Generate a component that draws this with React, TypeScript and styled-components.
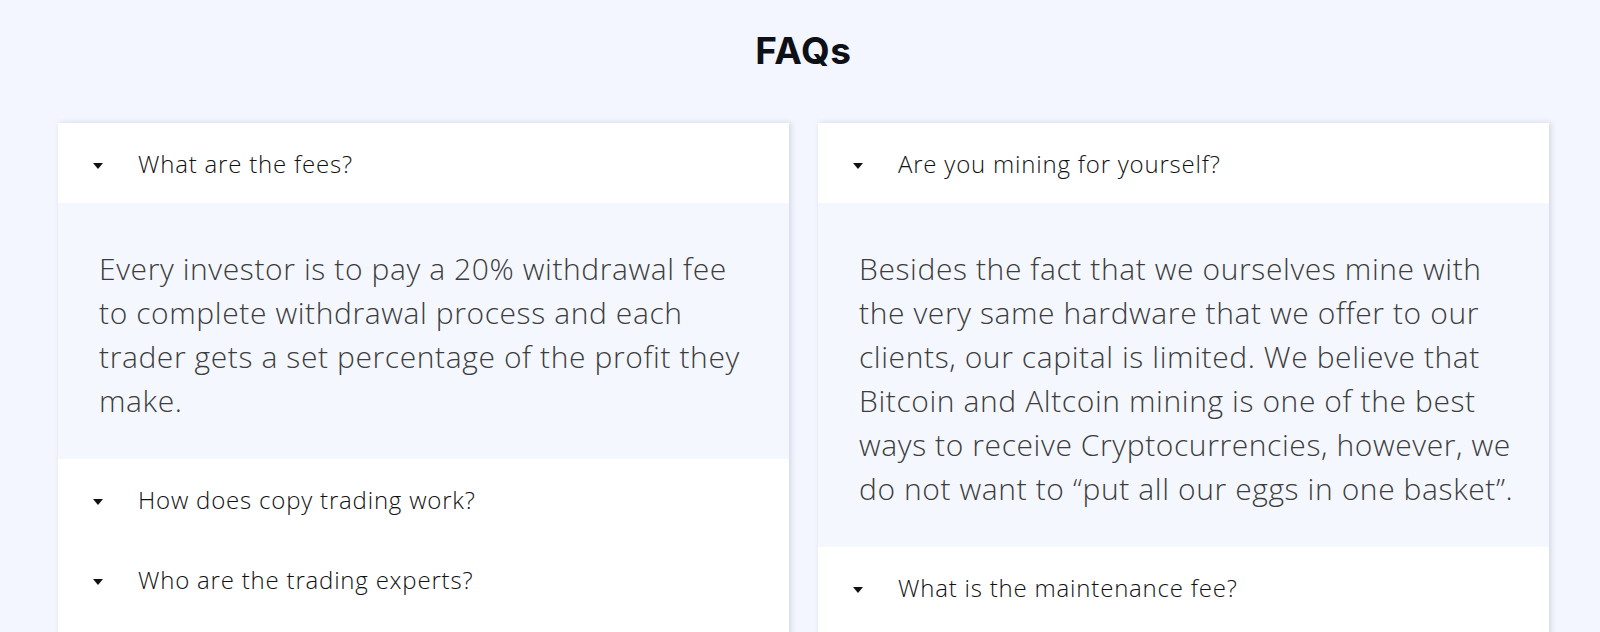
import React from "react";
import styled, { createGlobalStyle } from "styled-components";

const GlobalStyle = createGlobalStyle`
  html, body {
    margin: 0;
    padding: 0;
    background: #f3f6fe;
  }
  body {
    font-family: "Open Sans", "Lato", sans-serif;
  }
`;

const Page = styled.div`
  min-height: 700px;
  padding: 26px 51px 0 58px;
  box-sizing: border-box;
`;

const Title = styled.h1`
  margin: 0 0 47px;
  text-align: center;
  font-family: "Inter", "Lato", sans-serif;
  font-weight: 700;
  font-size: 37px;
  line-height: 50px;
  color: #0d1117;
  letter-spacing: 0.6px;
`;

const Columns = styled.div`
  display: grid;
  grid-template-columns: 1fr 1fr;
  gap: 29px;
  align-items: start;
`;

const Card = styled.div`
  background: #ffffff;
  box-shadow: 2px 0 6px rgba(20, 30, 60, 0.14);
  padding-bottom: 60px;
`;

const Item = styled.div``;

const Question = styled.button`
  display: flex;
  align-items: center;
  width: 100%;
  height: 80px;
  padding: 0 0 0 35px;
  border: 0;
  background: transparent;
  cursor: pointer;
  text-align: left;
  font-family: "Open Sans", sans-serif;
  font-weight: 300;
  font-size: 24px;
  letter-spacing: 0.8px;
  color: #111111;
`;

const Caret = styled.span`
  width: 0;
  height: 0;
  border-left: 5.5px solid transparent;
  border-right: 5.5px solid transparent;
  border-top: 6px solid #111;
  margin: 6px 35px 0 0;
  flex: none;
`;

const Answer = styled.div`
  background: #f4f7fe;
  padding: 44px 34px 36px 41px;
  font-family: "Open Sans", sans-serif;
  font-weight: 300;
  font-size: 30px;
  letter-spacing: 0.6px;
  line-height: 44px;
  color: #3d3d3d;
`;

type Faq = { q: string; a?: string };

const left: Faq[] = [
  {
    q: "What are the fees?",
    a: "Every investor is to pay a 20% withdrawal fee to complete withdrawal process and each trader gets a set percentage of the profit they make.",
  },
  { q: "How does copy trading work?" },
  { q: "Who are the trading experts?" },
];

const right: Faq[] = [
  {
    q: "Are you mining for yourself?",
    a: "Besides the fact that we ourselves mine with the very same hardware that we offer to our clients, our capital is limited. We believe that Bitcoin and Altcoin mining is one of the best ways to receive Cryptocurrencies, however, we do not want to \u201cput all our eggs in one basket\u201d.",
  },
  { q: "What is the maintenance fee?" },
];

const FaqCard = ({ items }: { items: Faq[] }) => (
  <Card>
    {items.map((it) => (
      <Item key={it.q}>
        <Question>
          <Caret />
          {it.q}
        </Question>
        {it.a && <Answer>{it.a}</Answer>}
      </Item>
    ))}
  </Card>
);

export default function App() {
  return (
    <>
      <GlobalStyle />
      <Page>
        <Title>FAQs</Title>
        <Columns>
          <FaqCard items={left} />
          <FaqCard items={right} />
        </Columns>
      </Page>
    </>
  );
}
